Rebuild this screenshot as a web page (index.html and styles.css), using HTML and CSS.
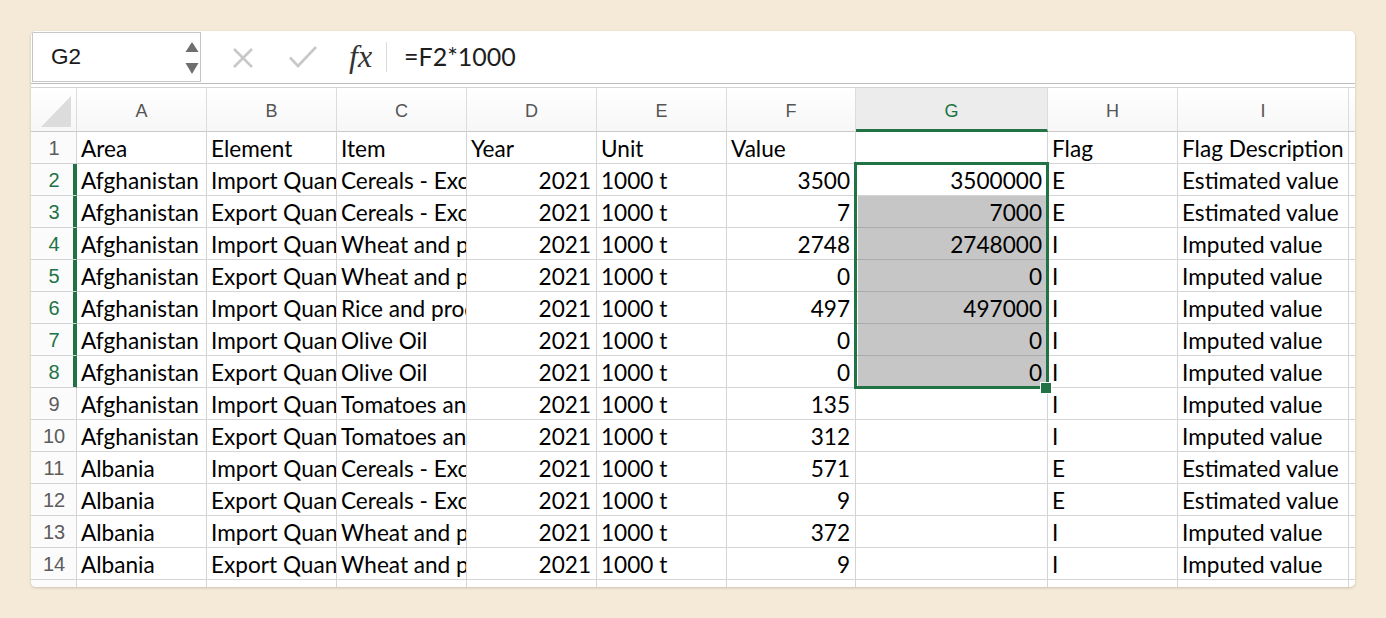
FILE: index.html
```html
<!DOCTYPE html>
<html>
<head>
<meta charset="utf-8">
<link rel="stylesheet" href="styles.css">
</head>
<body>
<div class="window">
  <div class="fbar">
    <div class="namebox">
      <span class="nb-text">G2</span>
      <svg class="nb-arrows" width="14" height="34" viewBox="0 0 14 34"><polygon points="7,0 13.5,10 0.5,10" fill="#6f6f6f"/><polygon points="0.5,21 13.5,21 7,32" fill="#6f6f6f"/></svg>
    </div>
    <svg class="ic ic-x" width="22" height="22" viewBox="0 0 22 22"><path d="M2 2 L20 20 M20 2 L2 20" stroke="#c8c8c8" stroke-width="2.6" fill="none"/></svg>
    <svg class="ic ic-ok" width="30" height="24" viewBox="0 0 30 24"><path d="M2 12.5 L10 21 L28 2" stroke="#c8c8c8" stroke-width="2.6" fill="none"/></svg>
    <span class="fx">fx</span>
    <span class="fsep"></span>
    <span class="formula">=F2*1000</span>
  </div>
  <div class="fgap"></div>
  <div class="grid">
    <div class="ch corner"><svg width="45" height="43" viewBox="0 0 45 43"><polygon points="40,8 40,39 10,39" fill="#dcdcdc"/></svg></div>
    <div class="ch">A</div><div class="ch">B</div><div class="ch">C</div><div class="ch">D</div><div class="ch">E</div><div class="ch">F</div><div class="ch chsel">G</div><div class="ch">H</div><div class="ch">I</div><div class="ch"></div>

    <div class="rh">1</div><div class="c">Area</div><div class="c">Element</div><div class="c">Item</div><div class="c">Year</div><div class="c">Unit</div><div class="c">Value</div><div class="c"></div><div class="c">Flag</div><div class="c">Flag Description</div><div class="c"></div>

    <div class="rh rsel">2</div><div class="c">Afghanistan</div><div class="c">Import Quantity</div><div class="c">Cereals - Excluding Beer</div><div class="c n">2021</div><div class="c">1000 t</div><div class="c n">3500</div><div class="c n">3500000</div><div class="c">E</div><div class="c">Estimated value</div><div class="c"></div>

    <div class="rh rsel">3</div><div class="c">Afghanistan</div><div class="c">Export Quantity</div><div class="c">Cereals - Excluding Beer</div><div class="c n">2021</div><div class="c">1000 t</div><div class="c n">7</div><div class="c n gs">7000</div><div class="c">E</div><div class="c">Estimated value</div><div class="c"></div>

    <div class="rh rsel">4</div><div class="c">Afghanistan</div><div class="c">Import Quantity</div><div class="c">Wheat and products</div><div class="c n">2021</div><div class="c">1000 t</div><div class="c n">2748</div><div class="c n gs">2748000</div><div class="c">I</div><div class="c">Imputed value</div><div class="c"></div>

    <div class="rh rsel">5</div><div class="c">Afghanistan</div><div class="c">Export Quantity</div><div class="c">Wheat and products</div><div class="c n">2021</div><div class="c">1000 t</div><div class="c n">0</div><div class="c n gs">0</div><div class="c">I</div><div class="c">Imputed value</div><div class="c"></div>

    <div class="rh rsel">6</div><div class="c">Afghanistan</div><div class="c">Import Quantity</div><div class="c">Rice and products</div><div class="c n">2021</div><div class="c">1000 t</div><div class="c n">497</div><div class="c n gs">497000</div><div class="c">I</div><div class="c">Imputed value</div><div class="c"></div>

    <div class="rh rsel">7</div><div class="c">Afghanistan</div><div class="c">Import Quantity</div><div class="c">Olive Oil</div><div class="c n">2021</div><div class="c">1000 t</div><div class="c n">0</div><div class="c n gs">0</div><div class="c">I</div><div class="c">Imputed value</div><div class="c"></div>

    <div class="rh rsel">8</div><div class="c">Afghanistan</div><div class="c">Export Quantity</div><div class="c">Olive Oil</div><div class="c n">2021</div><div class="c">1000 t</div><div class="c n">0</div><div class="c n gs">0</div><div class="c">I</div><div class="c">Imputed value</div><div class="c"></div>

    <div class="rh">9</div><div class="c">Afghanistan</div><div class="c">Import Quantity</div><div class="c">Tomatoes and products</div><div class="c n">2021</div><div class="c">1000 t</div><div class="c n">135</div><div class="c"></div><div class="c">I</div><div class="c">Imputed value</div><div class="c"></div>

    <div class="rh">10</div><div class="c">Afghanistan</div><div class="c">Export Quantity</div><div class="c">Tomatoes and products</div><div class="c n">2021</div><div class="c">1000 t</div><div class="c n">312</div><div class="c"></div><div class="c">I</div><div class="c">Imputed value</div><div class="c"></div>

    <div class="rh">11</div><div class="c">Albania</div><div class="c">Import Quantity</div><div class="c">Cereals - Excluding Beer</div><div class="c n">2021</div><div class="c">1000 t</div><div class="c n">571</div><div class="c"></div><div class="c">E</div><div class="c">Estimated value</div><div class="c"></div>

    <div class="rh">12</div><div class="c">Albania</div><div class="c">Export Quantity</div><div class="c">Cereals - Excluding Beer</div><div class="c n">2021</div><div class="c">1000 t</div><div class="c n">9</div><div class="c"></div><div class="c">E</div><div class="c">Estimated value</div><div class="c"></div>

    <div class="rh">13</div><div class="c">Albania</div><div class="c">Import Quantity</div><div class="c">Wheat and products</div><div class="c n">2021</div><div class="c">1000 t</div><div class="c n">372</div><div class="c"></div><div class="c">I</div><div class="c">Imputed value</div><div class="c"></div>

    <div class="rh">14</div><div class="c">Albania</div><div class="c">Export Quantity</div><div class="c">Wheat and products</div><div class="c n">2021</div><div class="c">1000 t</div><div class="c n">9</div><div class="c"></div><div class="c">I</div><div class="c">Imputed value</div><div class="c"></div>

    <div class="rh">15</div><div class="c"></div><div class="c"></div><div class="c"></div><div class="c"></div><div class="c"></div><div class="c"></div><div class="c"></div><div class="c"></div><div class="c"></div><div class="c"></div>

    <div class="selbox"></div>
    <div class="handle"></div>
  </div>
</div>
</body>
</html>
```

FILE: styles.css
```css
html, body {
  margin: 0;
  padding: 0;
}
body {
  background: #f5ead7;
  width: 1386px;
  height: 618px;
  overflow: hidden;
}
.window {
  margin: 31px 0 0 31px;
  width: 1324px;
  height: 556px;
  background: #fff;
  border-radius: 5px;
  box-shadow: 0 1px 3px rgba(0,0,0,0.18);
  overflow: hidden;
}
.fbar {
  height: 52px;
  border-bottom: 1px solid #bdbdbd;
  display: flex;
  align-items: center;
  box-sizing: content-box;
}
.namebox {
  box-sizing: border-box;
  align-self: flex-start;
  margin: 1px 0 0 1px;
  width: 169px;
  height: 50px;
  border: 1px solid #c6c6c6;
  display: flex;
  align-items: center;
  padding-left: 18px;
  padding-right: 1px;
}
.nb-text {
  font-family: "Liberation Sans", Arial, sans-serif;
  font-size: 22.5px;
  color: #1a1a1a;
}
.nb-arrows {
  margin-left: auto;
  margin-top: 4px;
}
.ic { flex: none; }
.ic-x { margin-left: 31px; margin-top: 2px; }
.ic-ok { margin-left: 34px; margin-top: 0px; }
.fx {
  margin-left: 31px;
  font-family: "Liberation Serif", "Times New Roman", serif;
  font-style: italic;
  font-size: 32px;
  color: #333;
  margin-top: -2px;
}
.fsep {
  width: 1px;
  height: 30px;
  background: #dadada;
  margin-left: 14px;
}
.formula {
  margin-left: 17px;
  font-family: Lato, "Liberation Sans", sans-serif;
  font-size: 25px;
  color: #1e1e1e;
  margin-top: -2px;
}
.fgap {
  height: 3px;
  border-bottom: 1px solid #d3d3d3;
}
.grid {
  position: relative;
  display: grid;
  grid-template-columns: 46px 130px 130px 130px 130px 130px 129px 192px 130px 171px 1fr;
  grid-template-rows: 44px repeat(15, 32px);
}
.ch {
  box-sizing: border-box;
  border-right: 1px solid #dcdcdc;
  border-bottom: 1px solid #c9c9c9;
  background: linear-gradient(#ffffff, #f7f7f7);
  font-family: "Liberation Sans", Arial, sans-serif;
  font-size: 18px;
  color: #555;
  display: flex;
  align-items: center;
  justify-content: center;
  padding-top: 4px;
}
.corner { padding: 0; align-items: flex-start; justify-content: flex-start; }
.corner svg { display: block; }
.chsel {
  background: #ececec;
  color: #217346;
  border-bottom: 3px solid #217346;
  padding-top: 6px;
}
.rh {
  box-sizing: border-box;
  border-right: 1px solid #d4d4d4;
  border-bottom: 1px solid #d4d4d4;
  background: #fbfbfb;
  font-family: "Liberation Sans", Arial, sans-serif;
  font-size: 20px;
  color: #5c5c5c;
  display: flex;
  align-items: center;
  justify-content: center;
  padding-left: 1px;
  padding-top: 1px;
}
.rsel {
  color: #217346;
  border-right-color: #217346;
  box-shadow: inset -3px 0 0 #217346;
}
.c {
  box-sizing: border-box;
  border-right: 1px solid #d4d4d4;
  border-bottom: 1px solid #d4d4d4;
  overflow: hidden;
  white-space: nowrap;
  padding: 1px 5px 0 4px;
  font-family: Lato, "Liberation Sans", sans-serif;
  font-size: 22.6px;
  line-height: 31px;
  color: #000;
}
.n { text-align: right; }
.gs {
  background: #c6c6c6;
  border-bottom-color: #acacac;
  box-shadow: inset 2px 0 0 #fff, inset -1px 0 0 #fff;
}
.selbox {
  position: absolute;
  left: 823px;
  top: 74px;
  width: 195px;
  height: 227px;
  box-sizing: border-box;
  border: 3px solid #217346;
  pointer-events: none;
}
.handle {
  position: absolute;
  left: 1009px;
  top: 294px;
  width: 10px;
  height: 10px;
  background: #217346;
  border: 1px solid #fff;
}
```
